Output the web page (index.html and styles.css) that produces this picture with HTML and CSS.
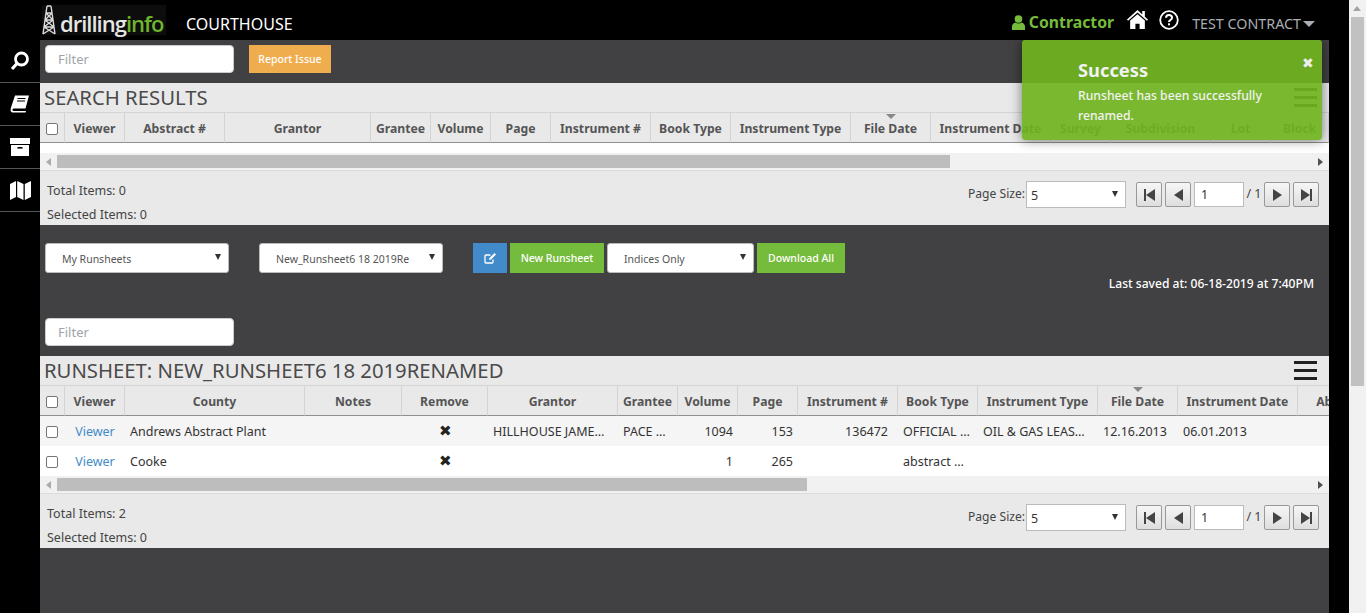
FILE: index.html
```html
<!DOCTYPE html>
<html>
<head>
  <title>Courthouse</title>
  <link rel="stylesheet" href="styles.css">
</head>
<body>
  <div class="page">
    <header class="topbar">
      <div class="logo">
        <svg class="derrick" width="14" height="30" viewBox="0 0 14 30" fill="none" stroke="#ddd" stroke-width="1.4">
          <path d="M5 1h4M5 1L1 29M9 1l4 28M4 8h6M3 15h8M2 22h10M4 8l7 7M10 8l-7 7M3 15l9 7M11 15l-9 7M2 22l11 7M12 22L1 29"/>
        </svg>
        <span class="logo-text">drilling<span class="logo-green">info</span></span>
      </div>
      <div class="app-name">COURTHOUSE</div>
      <div class="top-right">
        <span class="role">
          <svg width="13" height="15" viewBox="0 0 13 15" fill="#76bc3c"><circle cx="6.5" cy="4" r="3.8"/><path d="M0 15v-3.5C0 9 2 8 3.5 7.5c1.8 1.3 4.2 1.3 6 0C11 8 13 9 13 11.5V15z"/></svg>
          Contractor
        </span>
        <svg class="home-icon" width="21" height="21" viewBox="0 0 20 20" fill="#fff"><path d="M10 1L0 10l1 1.2L10 3.4l9 7.8 1-1.2-3-2.7V2h-2.5v3.2z"/><path d="M10 5l-7 6v8h5v-5h4v5h5v-8z"/></svg>
        <svg class="help-icon" width="20" height="20" viewBox="0 0 20 20" fill="none"><circle cx="10" cy="10" r="8.8" stroke="#fff" stroke-width="1.8"/><path d="M7 7.8C7 6 8.4 5 10 5s3 1 3 2.7c0 2.3-3 2.3-3 4.3" stroke="#fff" stroke-width="2"/><rect x="9" y="13.3" width="2" height="2" fill="#fff"/></svg>
        <span class="user-menu">TEST CONTRACT<span class="caret"></span></span>
      </div>
    </header>

    <div class="layout">
      <nav class="sidebar">
        <a class="side-item">
          <svg width="20" height="20" viewBox="0 0 20 20" fill="none" stroke="#fff"><circle cx="11.5" cy="8" r="6" stroke-width="2.8"/><path d="M7 12.5L2 18" stroke-width="3.2"/></svg>
        </a>
        <a class="side-item">
          <svg width="20" height="20" viewBox="0 0 20 20" fill="#fff"><path d="M5 1.5h14l-3.5 13H3.5c-1.5 0-1.5 2.5 0 2.5H16l-.5 1.5H3C.5 18.5.2 16 1 13.5z"/><path d="M7.5 4.5h8M7 7h8" stroke="#000" stroke-width="1.2"/></svg>
        </a>
        <a class="side-item">
          <svg width="20" height="18" viewBox="0 0 20 18" fill="#fff"><rect x="0" y="0" width="20" height="6"/><path d="M1 7h18v11H1z"/><rect x="7.5" y="9" width="5" height="1.6" fill="#000"/></svg>
        </a>
        <a class="side-item">
          <svg width="21" height="21" viewBox="0 0 21 21" fill="#fff"><path d="M0 4l6-3v16l-6 3zM7.2 1l6.3 3v16l-6.3-3zM14.8 4L21 1v16l-6.2 3z"/></svg>
        </a>
      </nav>

      <main class="main">
        <div class="toolbar">
          <input class="filter" type="text" placeholder="Filter">
          <button class="btn btn-orange">Report Issue</button>
        </div>

        <section class="panel">
          <div class="panel-title">
            <h2>SEARCH RESULTS</h2>
            <span class="menu-icon"><i></i><i></i><i></i></span>
          </div>
          <div class="grid-wrap">
            <table class="grid grid-search">
              <colgroup>
                <col class="w25"><col class="w60"><col class="w100"><col class="w146"><col class="w60"><col class="w60"><col class="w60"><col class="w100"><col class="w80"><col class="w120"><col class="w80"><col class="w120"><col class="w60"><col class="w100"><col class="w60"><col class="w58">
              </colgroup>
              <thead>
                <tr>
                  <th><span class="check"></span></th>
                  <th>Viewer</th><th>Abstract #</th><th>Grantor</th><th>Grantee</th><th>Volume</th><th>Page</th><th>Instrument #</th><th>Book Type</th><th>Instrument Type</th>
                  <th class="sorted">File Date</th>
                  <th>Instrument Date</th><th>Survey</th><th>Subdivision</th><th>Lot</th><th>Block</th>
                </tr>
              </thead>
            </table>
            <div class="grid-empty"></div>
            <div class="hscroll">
              <span class="arrow-left"></span>
              <span class="thumb thumb-search"></span>
              <span class="arrow-right"></span>
            </div>
          </div>
          <div class="pager-row">
            <div class="totals">
              <div>Total Items: 0</div>
              <div>Selected Items: 0</div>
            </div>
            <div class="pager">
              <span class="pager-label">Page Size:</span>
              <div class="select select-size">5<span class="select-arrow"></span></div>
              <button class="page-btn"><span class="bar"></span><span class="tri-l"></span></button>
              <button class="page-btn"><span class="tri-l"></span></button>
              <div class="page-num">1</div>
              <span class="page-of">/ 1</span>
              <button class="page-btn"><span class="tri-r"></span></button>
              <button class="page-btn"><span class="tri-r"></span><span class="bar"></span></button>
            </div>
          </div>
        </section>

        <div class="controls">
          <div class="controls-row">
            <div class="select select-dark select-mine">My Runsheets<span class="select-arrow"></span></div>
            <div class="select select-dark select-name">New_Runsheet6 18 2019Re<span class="select-arrow"></span></div>
            <button class="btn btn-blue">
              <svg width="13" height="12" viewBox="0 0 13 12" fill="none" stroke="#fff" stroke-width="1.3"><path d="M9 7.5V10a1 1 0 0 1-1 1H2a1 1 0 0 1-1-1V4a1 1 0 0 1 1-1h4.5"/><path d="M5 8l.5-2L10.5 1 12 2.5 7 7.5z" fill="#fff" stroke="none"/></svg>
            </button>
            <button class="btn btn-green">New Runsheet</button>
            <div class="select select-dark select-indices">Indices Only<span class="select-arrow"></span></div>
            <button class="btn btn-green btn-download">Download All</button>
          </div>
          <div class="saved">Last saved at: 06-18-2019 at 7:40PM</div>
          <input class="filter" type="text" placeholder="Filter">
        </div>

        <section class="panel">
          <div class="panel-title">
            <h2>RUNSHEET: NEW_RUNSHEET6 18 2019RENAMED</h2>
            <span class="menu-icon"><i></i><i></i><i></i></span>
          </div>
          <div class="grid-wrap">
            <table class="grid grid-runsheet">
              <colgroup>
                <col class="w25"><col class="w60"><col class="w180"><col class="w97"><col class="w86"><col class="w130"><col class="w60"><col class="w60"><col class="w60"><col class="w100"><col class="w80"><col class="w120"><col class="w80"><col class="w120"><col class="w100">
              </colgroup>
              <thead>
                <tr>
                  <th><span class="check"></span></th>
                  <th>Viewer</th><th>County</th><th>Notes</th><th>Remove</th><th>Grantor</th><th>Grantee</th><th>Volume</th><th>Page</th><th>Instrument #</th><th>Book Type</th><th>Instrument Type</th>
                  <th class="sorted">File Date</th>
                  <th>Instrument Date</th><th>Abstract #</th>
                </tr>
              </thead>
              <tbody>
                <tr class="odd">
                  <td><span class="check"></span></td>
                  <td class="center"><a class="link">Viewer</a></td>
                  <td>Andrews Abstract Plant</td>
                  <td></td>
                  <td class="center"><span class="remove">&#10006;</span></td>
                  <td>HILLHOUSE JAMES ET UX</td>
                  <td>PACE ENERGY</td>
                  <td class="right">1094</td>
                  <td class="right">153</td>
                  <td class="right wide">136472</td>
                  <td>OFFICIAL RECORDS</td>
                  <td>OIL &amp; GAS LEASE MEMO</td>
                  <td>12.16.2013</td>
                  <td>06.01.2013</td>
                  <td></td>
                </tr>
                <tr>
                  <td><span class="check"></span></td>
                  <td class="center"><a class="link">Viewer</a></td>
                  <td>Cooke</td>
                  <td></td>
                  <td class="center"><span class="remove">&#10006;</span></td>
                  <td></td>
                  <td></td>
                  <td class="right">1</td>
                  <td class="right">265</td>
                  <td></td>
                  <td>abstract plant</td>
                  <td></td>
                  <td></td>
                  <td></td>
                  <td></td>
                </tr>
              </tbody>
            </table>
            <div class="hscroll">
              <span class="arrow-left"></span>
              <span class="thumb thumb-runsheet"></span>
              <span class="arrow-right"></span>
            </div>
          </div>
          <div class="pager-row">
            <div class="totals">
              <div>Total Items: 2</div>
              <div>Selected Items: 0</div>
            </div>
            <div class="pager">
              <span class="pager-label">Page Size:</span>
              <div class="select select-size">5<span class="select-arrow"></span></div>
              <button class="page-btn"><span class="bar"></span><span class="tri-l"></span></button>
              <button class="page-btn"><span class="tri-l"></span></button>
              <div class="page-num">1</div>
              <span class="page-of">/ 1</span>
              <button class="page-btn"><span class="tri-r"></span></button>
              <button class="page-btn"><span class="tri-r"></span><span class="bar"></span></button>
            </div>
          </div>
        </section>
      </main>

      <div class="gutter"></div>
    </div>

    <div class="toast">
      <span class="toast-close">&#10006;</span>
      <div class="toast-title">Success</div>
      <div class="toast-msg">Runsheet has been successfully renamed.</div>
    </div>
  </div>

  <div class="vscroll">
    <span class="vscroll-up"></span>
    <span class="vscroll-thumb"></span>
  </div>
</body>
</html>
```

FILE: styles.css
```css
* {
  box-sizing: border-box;
}
html, body {
  margin: 0;
  height: 613px;
  overflow: hidden;
}
body {
  display: flex;
  background: #000;
  font-family: "Noto Sans", Arial, sans-serif;
  font-size: 12.5px;
  color: #333;
}
.page {
  position: relative;
  width: 1349px;
  height: 613px;
  display: flex;
  flex-direction: column;
}

/* top bar */
.topbar {
  height: 40px;
  display: flex;
  align-items: flex-start;
  background: #000;
}
.logo {
  margin: 5px 0 0 42px;
  width: 124px;
  height: 30px;
  background: #0d0d0d;
  display: flex;
  align-items: flex-start;
}
.derrick {
  margin-right: 4px;
}
.logo-text {
  font-family: "Open Sans", sans-serif;
  font-size: 22px;
  line-height: 34px;
  letter-spacing: -1px;
  font-weight: 600;
  color: #e6e6e6;
  margin-top: 1px;
}
.logo-green {
  color: #6db52d;
}
.app-name {
  margin: 14px 0 0 20px;
  font-size: 16px;
  line-height: 20px;
  color: #fff;
}
.top-right {
  margin-left: auto;
  padding-right: 34px;
  display: flex;
  align-items: flex-start;
}
.role {
  margin-top: 11px;
  font-size: 15.8px;
  line-height: 22px;
  font-weight: 700;
  color: #76bc3c;
  display: flex;
  align-items: center;
  gap: 4px;
}
.home-icon {
  margin: 9px 0 0 13px;
}
.help-icon {
  margin: 10px 0 0 11px;
}
.user-menu {
  margin: 14px 0 0 13px;
  font-size: 14.3px;
  line-height: 20px;
  color: #a9aeb3;
  display: flex;
  align-items: center;
}
.caret {
  margin-left: 2px;
  border-left: 6px solid transparent;
  border-right: 6px solid transparent;
  border-top: 6px solid #a9aeb3;
}

/* layout */
.layout {
  flex: 1;
  display: flex;
  min-height: 0;
}
.sidebar {
  width: 40px;
  flex: none;
}
.side-item {
  height: 43px;
  display: flex;
  align-items: center;
  justify-content: center;
  border-bottom: 1px solid #555;
}
.main {
  width: 1289px;
  flex: none;
  background: #414042;
  overflow: hidden;
}
.gutter {
  width: 20px;
  flex: none;
}

/* toolbar */
.toolbar {
  height: 43px;
  padding: 5px;
  display: flex;
  align-items: flex-start;
  gap: 15px;
}
.filter {
  width: 189px;
  height: 28px;
  padding: 0 12px;
  border: 1px solid #ccc;
  border-radius: 4px;
  background: #fff;
  font-family: inherit;
  font-size: 13px;
}
.filter::placeholder {
  color: #a0a4a8;
}
.btn {
  height: 28px;
  padding: 0 10px;
  border: none;
  font-family: inherit;
  font-size: 10.5px;
  font-weight: 500;
  color: #fff;
  cursor: pointer;
}
.btn-orange {
  width: 82px;
  padding: 0;
  background: #f0ad4e;
}
.btn-blue {
  width: 34px;
  height: 30px;
  padding: 0;
  background: #428bca;
  display: flex;
  align-items: center;
  justify-content: center;
}
.btn-green {
  height: 30px;
  width: 94px;
  padding: 0;
  background: #76bc3c;
}
.btn-download {
  width: 88px;
}

/* panels */
.panel {
  background: #e9e9e9;
}
.panel-title {
  height: 29px;
  padding-left: 4px;
  display: flex;
  align-items: center;
  justify-content: space-between;
}
.panel-title h2 {
  margin: 0;
  font-size: 20.3px;
  line-height: 27px;
  font-weight: 400;
  color: #4a4a4a;
}
.menu-icon {
  width: 23px;
  margin-right: 12px;
  display: flex;
  flex-direction: column;
  gap: 5px;
}
.menu-icon i {
  display: block;
  height: 3px;
  background: #222;
}

/* data grids */
.grid-wrap {
  overflow: hidden;
}
.grid {
  table-layout: fixed;
  border-collapse: separate;
  border-spacing: 0;
}
.grid-search {
  width: 1289px;
}
.grid-runsheet {
  width: 1358px;
}
.w25 { width: 25px; }
.w58 { width: 58px; }
.w60 { width: 60px; }
.w80 { width: 80px; }
.w86 { width: 86px; }
.w97 { width: 97px; }
.w100 { width: 100px; }
.w120 { width: 120px; }
.w130 { width: 130px; }
.w146 { width: 146px; }
.w180 { width: 180px; }
.grid th {
  height: 31px;
  padding: 2px 0 0;
  border-top: 1px solid #d4d4d4;
  border-bottom: 1px solid #8f8f8f;
  border-right: 1px solid #d4d4d4;
  background: #e9e9e9;
  font-size: 12.2px;
  font-weight: 700;
  color: #555;
  text-align: center;
  white-space: nowrap;
  overflow: hidden;
  position: relative;
}
.grid th.sorted::before {
  content: "";
  position: absolute;
  top: 1px;
  left: 50%;
  margin-left: -5px;
  border-left: 5px solid transparent;
  border-right: 5px solid transparent;
  border-top: 5px solid #888;
}
.grid td {
  height: 30px;
  padding: 0 8px 0 5px;
  white-space: nowrap;
  overflow: hidden;
  text-overflow: ellipsis;
  color: #333;
  background: #fff;
}
.grid tr.odd td {
  background: #f5f5f5;
}
.grid td:first-child {
  padding: 0 1px 0 0;
  text-align: center;
}
.grid th:first-child {
  padding: 0 1px 0 0;
}
.grid td.center {
  padding: 0 5px;
  text-align: center;
}
.grid td.right {
  text-align: right;
  padding-right: 5px;
}
.grid td.wide {
  padding-right: 10px;
}
.link {
  color: #428bca;
}
.remove {
  font-size: 15px;
  line-height: 15px;
  color: #222;
}
.check {
  display: inline-block;
  width: 12px;
  height: 12px;
  border: 1px solid #767676;
  border-radius: 2px;
  background: #fff;
  vertical-align: middle;
}
.grid-empty {
  height: 10px;
  background: #fff;
}
.hscroll {
  height: 18px;
  padding: 2px 0;
  display: flex;
  align-items: center;
  background: #f1f1f1;
  border-bottom: 1px solid #dcdcdc;
}
.arrow-left {
  margin: 0 6px;
  flex: none;
  border-top: 4px solid transparent;
  border-bottom: 4px solid transparent;
  border-right: 5px solid #aaa;
}
.arrow-right {
  margin: 0 6px 0 auto;
  flex: none;
  border-top: 4px solid transparent;
  border-bottom: 4px solid transparent;
  border-left: 5px solid #505050;
}
.thumb {
  height: 13px;
  background: #bdbdbd;
}
.thumb-search {
  width: 893px;
}
.thumb-runsheet {
  width: 750px;
}

/* pager */
.pager-row {
  height: 54px;
  display: flex;
  justify-content: space-between;
  align-items: flex-start;
}
.totals {
  padding: 8px 0 0 7px;
  line-height: 24px;
  color: #444;
}
.pager {
  padding: 10px 10px 0 0;
  display: flex;
  align-items: flex-start;
}
.pager-label {
  font-size: 12.1px;
  line-height: 26px;
  color: #444;
}
.select {
  position: relative;
  background: #fff;
  border: 1px solid #bbb;
  color: #333;
}
.select-size {
  width: 100px;
  height: 27px;
  margin: 0 10px 0 1px;
  padding-left: 4px;
  line-height: 27px;
}
.select-arrow {
  position: absolute;
  right: 7px;
  top: 50%;
  margin-top: -4px;
  border-left: 3.5px solid transparent;
  border-right: 3.5px solid transparent;
  border-top: 6px solid #333;
}
.select-dark {
  height: 30px;
  border-radius: 3px;
  font-size: 10.5px;
  line-height: 30px;
  padding-left: 16px;
  color: #555;
  white-space: nowrap;
}
.select-mine {
  width: 184px;
}
.select-name {
  width: 184px;
  margin-left: 30px;
}
.select-indices {
  width: 147px;
}
.page-btn {
  width: 26px;
  height: 25px;
  margin-top: 1px;
  margin-right: 3px;
  padding: 0;
  border: 1px solid #999;
  border-radius: 2px;
  background: linear-gradient(#f6f6f6, #dedede);
  display: flex;
  align-items: center;
  justify-content: center;
}
.page-btn:last-child {
  margin-right: 0;
}
.bar {
  width: 2px;
  height: 12px;
  background: #444;
}
.tri-l {
  border-top: 6px solid transparent;
  border-bottom: 6px solid transparent;
  border-right: 9px solid #444;
}
.tri-r {
  border-top: 6px solid transparent;
  border-bottom: 6px solid transparent;
  border-left: 9px solid #444;
}
.page-num {
  width: 50px;
  height: 25px;
  margin-top: 1px;
  padding-left: 6px;
  border: 1px solid #bbb;
  background: #fff;
  line-height: 24px;
}
.page-of {
  width: 20px;
  text-align: center;
  line-height: 26px;
  color: #444;
}

/* dark controls between the two panels */
.controls {
  height: 131px;
  padding: 18px 5px 0;
}
.controls-row {
  display: flex;
  align-items: flex-start;
}
.controls-row .btn-blue {
  margin-left: 30px;
}
.controls-row .btn-green {
  margin-left: 3px;
}
.controls-row .select-indices {
  margin-left: 3px;
}
.saved {
  margin-right: 10px;
  padding-top: 1px;
  height: 45px;
  line-height: 20px;
  text-align: right;
  font-size: 12.1px;
  font-weight: 500;
  color: #fff;
}

/* notification over the page */
.toast {
  position: absolute;
  left: 1022px;
  top: 40px;
  width: 300px;
  height: 100px;
  padding: 18px 40px 0 56px;
  border-radius: 3px;
  background: rgba(112, 180, 30, 0.92);
  box-shadow: 0 0 12px rgba(0, 0, 0, 0.5);
  color: #f2f2f2;
}
.toast-title {
  font-size: 18.3px;
  line-height: 24px;
  font-weight: 700;
}
.toast-msg {
  margin-top: 4px;
  font-size: 12.2px;
  line-height: 20px;
  font-weight: 500;
}
.toast-close {
  position: absolute;
  right: 8px;
  top: 14px;
  font-size: 14px;
  line-height: 18px;
  color: #eee;
}

/* browser scrollbar */
.vscroll {
  width: 17px;
  height: 613px;
  flex: none;
  background: #f1f1f1;
  padding: 17px 2px 0;
  position: relative;
}
.vscroll-up {
  position: absolute;
  left: 4px;
  top: 6px;
  border-left: 4px solid transparent;
  border-right: 4px solid transparent;
  border-bottom: 5px solid #a3a3a3;
}
.vscroll-thumb {
  display: block;
  height: 369px;
  background: #c1c1c1;
}
```
